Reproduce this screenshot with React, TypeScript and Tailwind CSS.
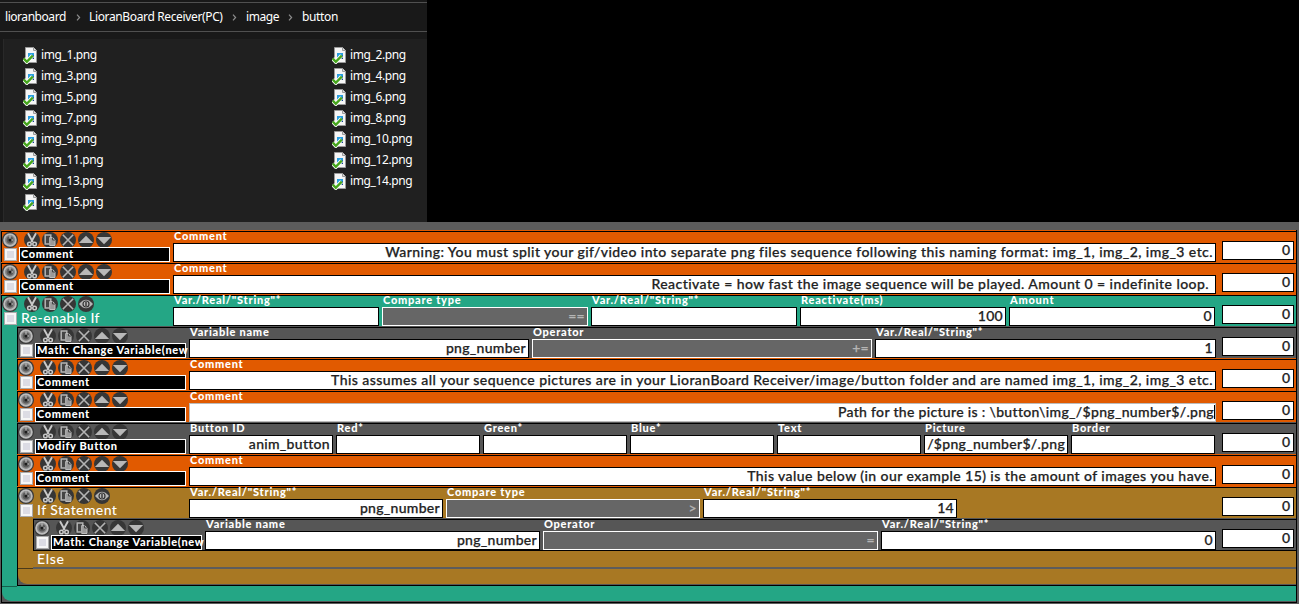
import type { ReactNode } from "react";

type Field = { label: string; value?: string; select?: boolean; active?: boolean; w: string };

const orange = "bg-[#e15a00]";
const gray = "bg-[#565656]";
const green = "bg-[#24a685]";
const brown = "bg-[#a87823]";

function FileIcon() {
  return (
    <svg width="15" height="17" viewBox="0 0 15 17" className="shrink-0">
      <path d="M2.5 .5h8l3 3v12h-11z" fill="#f6f6f6" stroke="#9a9a9a" />
      <path d="M10.5 .5v3h3" fill="#ddd" stroke="#9a9a9a" />
      <path d="M5 6h6v6H5z" fill="#2a9ee0" />
      <path d="M7 12l4-4v4z" fill="#12448c" />
      <path d="M.8 11.6l3 3.2L9.6 8.6" fill="none" stroke="#fff" strokeWidth="4" />
      <path d="M.8 11.6l3 3.2L9.8 8.6" fill="none" stroke="#45a51c" strokeWidth="2.4" />
    </svg>
  );
}

function FileItem({ name }: { name: string }) {
  return (
    <div className="flex h-[21px] items-center gap-[3px] pt-px">
      <FileIcon />
      <span className="tracking-[-0.38px]">{name}</span>
    </div>
  );
}

function Chevron() {
  return (
    <svg width="5" height="7" viewBox="0 0 5 7" className="mt-px shrink-0">
      <path d="M1 .7l2.6 2.8L1 6.3" fill="none" stroke="#8d8d8d" strokeWidth="1.2" />
    </svg>
  );
}

function Explorer() {
  const left = [1, 3, 5, 7, 9, 11, 13, 15];
  const right = [2, 4, 6, 8, 10, 12, 14];
  return (
    <div className="flex h-[222px] w-[427px] flex-col bg-[#191919] pt-[2px] font-['Noto_Sans',sans-serif] text-[12px] text-white">
      <div className="flex h-[30px] shrink-0 items-center border-y border-[#505050] pl-[5px] leading-none">
        <span className="w-[71px] tracking-[-0.45px]">lioranboard</span>
        <Chevron />
        <span className="ml-2 w-[143px] whitespace-nowrap tracking-[-0.36px]">LioranBoard Receiver(PC)</span>
        <Chevron />
        <span className="ml-[9px] w-[42px] tracking-[-0.4px]">image</span>
        <Chevron />
        <span className="ml-[9px] tracking-[-0.35px]">button</span>
      </div>
      <div className="ml-[3px] mt-[7px] flex flex-1 border-l border-[#292929] bg-[#202020] pl-[19px] pt-[5px]">
        <div className="w-[309px]">
          {left.map((n) => <FileItem key={n} name={`img_${n}.png`} />)}
        </div>
        <div>
          {right.map((n) => <FileItem key={n} name={`img_${n}.png`} />)}
        </div>
      </div>
    </div>
  );
}

function Round({ children }: { children: ReactNode }) {
  return (
    <svg width="16" height="16" viewBox="0 0 16 16" className="shrink-0">
      <circle cx="8" cy="8" r="8" fill="#363636" />
      {children}
    </svg>
  );
}

function Clock() {
  return (
    <svg width="16" height="16" viewBox="0 0 16 16" className="mr-[4px] shrink-0">
      <circle cx="8" cy="8" r="8" fill="#3a3a3a" />
      <circle cx="8" cy="8" r="5.9" fill="#868686" stroke="#bcbcbc" strokeWidth="1.8" />
      <circle cx="8" cy="8" r="3.4" fill="#5a5a5a" />
      <path d="M8 3.5V8h3" stroke="#ccc" strokeWidth="1" fill="none" />
      <circle cx="8" cy="8" r="1.5" fill="#1c1c1c" />
    </svg>
  );
}

function Icons({ block }: { block?: boolean }) {
  return (
    <div className="flex h-4 gap-[2px]">
      <Clock />
      <Round>
        <path d="M4 1.2L8.8 10M12 1.2L7.2 10" stroke="#c9c9c9" strokeWidth="1.9" fill="none" />
        <circle cx="5.4" cy="12" r="1.8" fill="none" stroke="#c9c9c9" strokeWidth="1.5" />
        <circle cx="10.6" cy="12" r="1.8" fill="none" stroke="#c9c9c9" strokeWidth="1.5" />
      </Round>
      <Round>
        <path d="M7 12H3.2V3h5.6v2.5" fill="#444" stroke="#b4b4b4" strokeWidth="1.5" />
        <path d="M7.7 5.5h3l2.3 2.5v5.5H7.7z" fill="#999" stroke="#bdbdbd" strokeWidth="1" />
        <path d="M10.5 5.5V8H13" fill="none" stroke="#444" strokeWidth="1" />
      </Round>
      <Round>
        <path d="M2.8 2.8l10.4 10.4M13.2 2.8L2.8 13.2" stroke="#b4b4b4" strokeWidth="1.6" />
      </Round>
      {block ? (
        <Round>
          <path d="M1 8q7-8.5 14 0q-7 8.5-14 0z" fill="#b4b4b4" />
          <circle cx="8" cy="8" r="3" fill="#bbb" stroke="#333" strokeWidth="1.2" />
          <path d="M8 6v4" stroke="#333" strokeWidth="1.4" />
        </Round>
      ) : (
        <>
          <Round><path d="M.8 11L8 3.8l7.2 7.2z" fill="#b8b8b8" /></Round>
          <Round><path d="M.8 5L8 12.2 15.2 5z" fill="#b8b8b8" /></Round>
        </>
      )}
    </div>
  );
}

function Row({ title, color, line, block, fields }: { title: string; color: string; line: string; block?: boolean; fields: Field[] }) {
  return (
    <div className={`flex h-8 flex-col ${line}`}>
      <div className={`mt-px flex h-[31px] border-l border-t border-black ${color}`}>
        <div className="w-[171px] shrink-0">
          <Icons block={block} />
          <div className="-mt-px flex h-[15px] pl-[2px]">
            <div className="mt-px size-[13px] shrink-0 border border-[#aaa] bg-[#dcdce4] shadow-[inset_0_0_0_2px_#f6f6f6]" />
            {block ? (
              <span className="-mt-px ml-[4px] whitespace-nowrap text-[14px] font-medium leading-[15px] tracking-[0.4px] text-white">{title}</span>
            ) : (
              <div className="ml-[2px] h-[15px] w-[151px] whitespace-nowrap border border-white bg-black pl-px text-[11px] font-black leading-[12px] tracking-[0.65px] text-white">
                {title}
              </div>
            )}
          </div>
        </div>
        <div className="flex w-[0px] grow gap-[3px]">
          {fields.map((f, i) => (
            <div key={i} className={`flex shrink-0 flex-col ${f.w}`}>
              <div className="-mt-[2px] h-[13px] whitespace-nowrap pl-px text-[11px] font-black leading-[12px] tracking-[0.75px] text-white">{f.label}</div>
              <div
                className={`flex h-[19px] items-center justify-end overflow-hidden whitespace-nowrap border pb-[2px] pr-[2px] text-[14px] font-medium leading-[15px] [-webkit-text-stroke:0.25px_currentColor] ${
                  f.active ? "tracking-[0.32px]" : (f.value ?? "").length > 20 ? "tracking-[0.435px]" : "tracking-[0.3px]"
                } ${
                  f.select ? "border-white bg-[#666] text-[#b5b5b5]" : f.active ? "border-[#bbb] bg-white text-[#222]" : "border-black bg-white text-[#222]"
                }`}
              >
                <span className="whitespace-pre">{f.value}</span>
                {f.active && <span className="-mr-[2px] h-[14px] w-px bg-black" />}
              </div>
            </div>
          ))}
        </div>
        <div className="mr-[2px] mt-[9px] flex h-[19px] w-[72px] shrink-0 items-center justify-end border border-black bg-white pb-[2px] pr-[3px] text-[14px] font-medium leading-[15px] text-[#222] [-webkit-text-stroke:0.25px_currentColor]">0</div>
      </div>
    </div>
  );
}

function Comment({ text, nested, active }: { text: string; nested?: boolean; active?: boolean }) {
  return <Row title="Comment" color={orange} line={orange} fields={[{ label: "Comment", value: text, active, w: nested ? "w-[1027px]" : "w-[1043px]" }]} />;
}

const str = 'Var./Real/"String"*';

export default function App() {
  return (
    <div className="h-[604px] w-[1299px] overflow-hidden bg-black">
      <Explorer />
      <div className="h-[382px] bg-[#5c5c5c] pl-px pr-[2px] pt-[8px] font-['Lato',sans-serif]">
        <div className="border-r border-black">
          <Comment text="Warning: You must split your gif/video into separate png files sequence following this naming format: img_1, img_2, img_3 etc." />
          <Comment text="Reactivate = how fast the image sequence will be played. Amount 0 = indefinite loop. " />
          <Row
            title="Re-enable If" color={green} line={orange} block
            fields={[
              { label: str, w: "w-[206px]" },
              { label: "Compare type", value: "==", select: true, w: "w-[206px]" },
              { label: str, w: "w-[206px]" },
              { label: "Reactivate(ms)", value: "100", w: "w-[206px]" },
              { label: "Amount", value: "0", w: "w-[206px]" },
            ]}
          />
          <div className={`border-l border-black pl-[15px] ${green}`}>
            <Row
              title="Math: Change Variable(new" color={gray} line={gray}
              fields={[
                { label: "Variable name", value: "png_number", w: "w-[340px]" },
                { label: "Operator", value: "+=", select: true, w: "w-[340px]" },
                { label: str, value: "1", w: "w-[341px]" },
              ]}
            />
            <Comment nested text="This assumes all your sequence pictures are in your LioranBoard Receiver/image/button folder and are named img_1, img_2, img_3 etc." />
            <Comment nested active text="Path for the picture is : \button\img_/$png_number$/.png" />
            <Row
              title="Modify Button" color={gray} line={gray}
              fields={[
                { label: "Button ID", value: "anim_button", w: "w-[144px]" },
                { label: "Red*", w: "w-[144px]" },
                { label: "Green*", w: "w-[144px]" },
                { label: "Blue*", w: "w-[144px]" },
                { label: "Text", w: "w-[144px]" },
                { label: "Picture", value: "/$png_number$/.png", w: "w-[144px]" },
                { label: "Border", w: "w-[144px]" },
              ]}
            />
            <Comment nested text="This value below (in our example 15) is the amount of images you have." />
            <Row
              title="If Statement" color={brown} line={orange} block
              fields={[
                { label: str, value: "png_number", w: "w-[254px]" },
                { label: "Compare type", value: ">", select: true, w: "w-[254px]" },
                { label: str, value: "14", w: "w-[254px]" },
              ]}
            />
            <div className={`border-l border-black pl-[15px] ${brown}`}>
              <Row
                title="Math: Change Variable(new" color={gray} line={gray}
                fields={[
                  { label: "Variable name", value: "png_number", w: "w-[335px]" },
                  { label: "Operator", value: "=", select: true, w: "w-[335px]" },
                  { label: str, value: "0", w: "w-[335px]" },
                ]}
              />
              <div className="h-[17px] border-t border-black bg-[#a87823] pl-[4px] text-[14px] font-medium leading-[15px] tracking-[0.65px] text-white">Else</div>
            </div>
            <div className="border-l border-black bg-[#565656]">
              <div className="flex h-[2px] bg-[#5c5c5c]">
                <div className={`w-[15px] border-b border-[#4a3a1a] ${brown}`} />
              </div>
              <div className={`h-[15px] rounded-bl-[9px] ${brown}`} />
            </div>
            <div className="h-[2px] border-b border-l border-black bg-[#565656]" />
          </div>
          <div className="border-l border-black bg-[#565656]">
            <div className={`h-[15px] rounded-bl-[9px] ${green}`}>
              <div className="h-px w-[15px] bg-[#14604c]" />
            </div>
          </div>
          <div className="h-[2px] border-b border-l border-black bg-[#565656]" />
        </div>
      </div>
    </div>
  );
}
